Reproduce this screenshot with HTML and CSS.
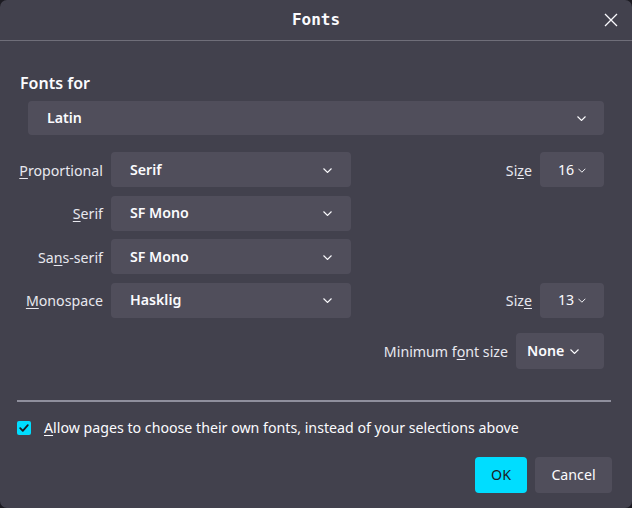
FILE: index.html
```html
<!DOCTYPE html>
<html>
<head>
<meta charset="utf-8">
<link rel="stylesheet" href="styles.css">
</head>
<body>
<div class="dialog">
  <div class="header">
    <div class="title">Fonts</div>
    <svg class="close" width="14" height="14" viewBox="0 0 14 14"><path d="M1 1 L13 13 M13 1 L1 13" stroke="#fbfbfe" stroke-width="1.3" fill="none"/></svg>
  </div>
  <div class="content">
    <div class="section-title">Fonts for</div>
    <div class="select wide"><span>Latin</span><svg class="chev" width="9" height="5" viewBox="0 0 9 5"><path d="M0.5 0.5 L4.5 4.5 L8.5 0.5" stroke="#fbfbfe" stroke-width="1.1" fill="none"/></svg></div>
    <div class="grid">
      <div class="label"><u>P</u>roportional</div>
      <div class="select"><span>Serif</span><svg class="chev" width="9" height="5" viewBox="0 0 9 5"><path d="M0.5 0.5 L4.5 4.5 L8.5 0.5" stroke="#fbfbfe" stroke-width="1.1" fill="none"/></svg></div>
      <div></div>
      <div class="label light">Si<u>z</u>e</div>
      <div class="select small"><span>16</span><svg class="chev" width="9" height="5" viewBox="0 0 9 5"><path d="M0.5 0.5 L4.5 4.5 L8.5 0.5" stroke="#fbfbfe" stroke-width="1.1" fill="none"/></svg></div>

      <div class="label"><u>S</u>erif</div>
      <div class="select"><span>SF Mono</span><svg class="chev" width="9" height="5" viewBox="0 0 9 5"><path d="M0.5 0.5 L4.5 4.5 L8.5 0.5" stroke="#fbfbfe" stroke-width="1.1" fill="none"/></svg></div>
      <div></div><div></div><div></div>

      <div class="label">Sa<u>n</u>s-serif</div>
      <div class="select"><span>SF Mono</span><svg class="chev" width="9" height="5" viewBox="0 0 9 5"><path d="M0.5 0.5 L4.5 4.5 L8.5 0.5" stroke="#fbfbfe" stroke-width="1.1" fill="none"/></svg></div>
      <div></div><div></div><div></div>

      <div class="label"><u>M</u>onospace</div>
      <div class="select"><span>Hasklig</span><svg class="chev" width="9" height="5" viewBox="0 0 9 5"><path d="M0.5 0.5 L4.5 4.5 L8.5 0.5" stroke="#fbfbfe" stroke-width="1.1" fill="none"/></svg></div>
      <div></div>
      <div class="label light">Siz<u>e</u></div>
      <div class="select small"><span>13</span><svg class="chev" width="9" height="5" viewBox="0 0 9 5"><path d="M0.5 0.5 L4.5 4.5 L8.5 0.5" stroke="#fbfbfe" stroke-width="1.1" fill="none"/></svg></div>
    </div>
    <div class="minrow">
      <div class="label light">Minimum f<u>o</u>nt size</div>
      <div class="select min"><span>None</span><svg class="chev" width="9" height="5" viewBox="0 0 9 5"><path d="M0.5 0.5 L4.5 4.5 L8.5 0.5" stroke="#fbfbfe" stroke-width="1.1" fill="none"/></svg></div>
    </div>
  </div>
  <div class="sep"></div>
  <div class="check-row">
    <div class="checkbox"><svg width="14" height="14" viewBox="0 0 14 14"><path d="M3.2 7.2 L5.8 9.8 L10.8 4.2" stroke="#1c1b22" stroke-width="1.8" fill="none" stroke-linecap="round" stroke-linejoin="round"/></svg></div>
    <div class="check-label"><u>A</u>llow pages to choose their own fonts, instead of your selections above</div>
  </div>
  <div class="buttons">
    <div class="btn primary">OK</div>
    <div class="btn">Cancel</div>
  </div>
</div>
</body>
</html>
```
FILE: styles.css
```css
html, body {
  margin: 0;
  padding: 0;
  background: #1c1b22;
}
.dialog {
  width: 632px;
  height: 508px;
  background: #42414d;
  border-radius: 7px;
  color: #fbfbfe;
  font-family: "Noto Sans", "Open Sans", sans-serif;
  font-size: 14.2px;
  display: flex;
  flex-direction: column;
  box-sizing: border-box;
  overflow: hidden;
}
.header {
  height: 41px;
  border-bottom: 1px solid #6f6e79;
  box-sizing: border-box;
  display: flex;
  align-items: center;
  justify-content: center;
  position: relative;
}
.title {
  font-family: "DejaVu Sans Mono", monospace;
  font-weight: bold;
  font-size: 16px;
  margin-top: -1px;
}
.close {
  position: absolute;
  right: 14px;
  top: 13px;
}
.content {
  padding: 0 28px 0 20px;
}
.section-title {
  font-weight: 600;
  font-size: 16px;
  margin-top: 30px;
  height: 24px;
  line-height: 24px;
}
.select {
  background: #504e5b;
  border-radius: 4px;
  height: 35px;
  box-sizing: border-box;
  display: flex;
  align-items: center;
  justify-content: space-between;
  padding: 1px 19px 0 19px;
  font-weight: 600;
}
.select span { line-height: 1; }
.select.wide {
  margin: 6px 0 0 8px;
  height: 34px;
  padding-right: 18px;
}
.select.small {
  padding: 1px 18px 0 18px;
  justify-content: flex-start;
  gap: 4px;
  font-weight: 400;
}
.select.min {
  padding: 1px 18px 0 11px;
  justify-content: flex-start;
  gap: 6px;
}
.chev { display: block; }
.grid {
  margin-top: 17px;
  display: grid;
  grid-template-columns: 83px 240px 1fr auto 64px;
  column-gap: 8px;
  row-gap: 8.5px;
  grid-auto-rows: 35px;
}
.label {
  display: flex;
  align-items: center;
  justify-content: flex-end;
  white-space: nowrap;
  color: #e8e8ef;
  padding-top: 1px;
}
.label u, .check-label u { text-underline-offset: 2px; }
.minrow {
  margin-top: 15px;
  display: flex;
  justify-content: flex-end;
  gap: 8px;
  height: 36px;
}
.select.min { height: 36px; width: 88px; }
.sep {
  margin: 31px 21px 0 17px;
  height: 2px;
  background: #8f8f9d;
}
.check-row {
  display: flex;
  align-items: center;
  margin: 17px 0 0 17px;
  gap: 13px;
  height: 18px;
}
.checkbox {
  width: 14px;
  height: 14px;
  background: #00ddff;
  border-radius: 2px;
}
.checkbox svg { display: block; }
.check-label { white-space: nowrap; }
.buttons {
  display: flex;
  justify-content: flex-end;
  gap: 8px;
  margin: 20px 20px 0 0;
}
.btn {
  height: 36px;
  padding: 0 16px;
  border-radius: 4px;
  background: #504e5b;
  display: flex;
  align-items: center;
  justify-content: center;
  box-sizing: border-box;
  min-width: 52px;
}
.btn.primary {
  background: #00ddff;
  color: #1c1b22;
  width: 52px;
}
.btn:not(.primary) { width: 77px; }
```
